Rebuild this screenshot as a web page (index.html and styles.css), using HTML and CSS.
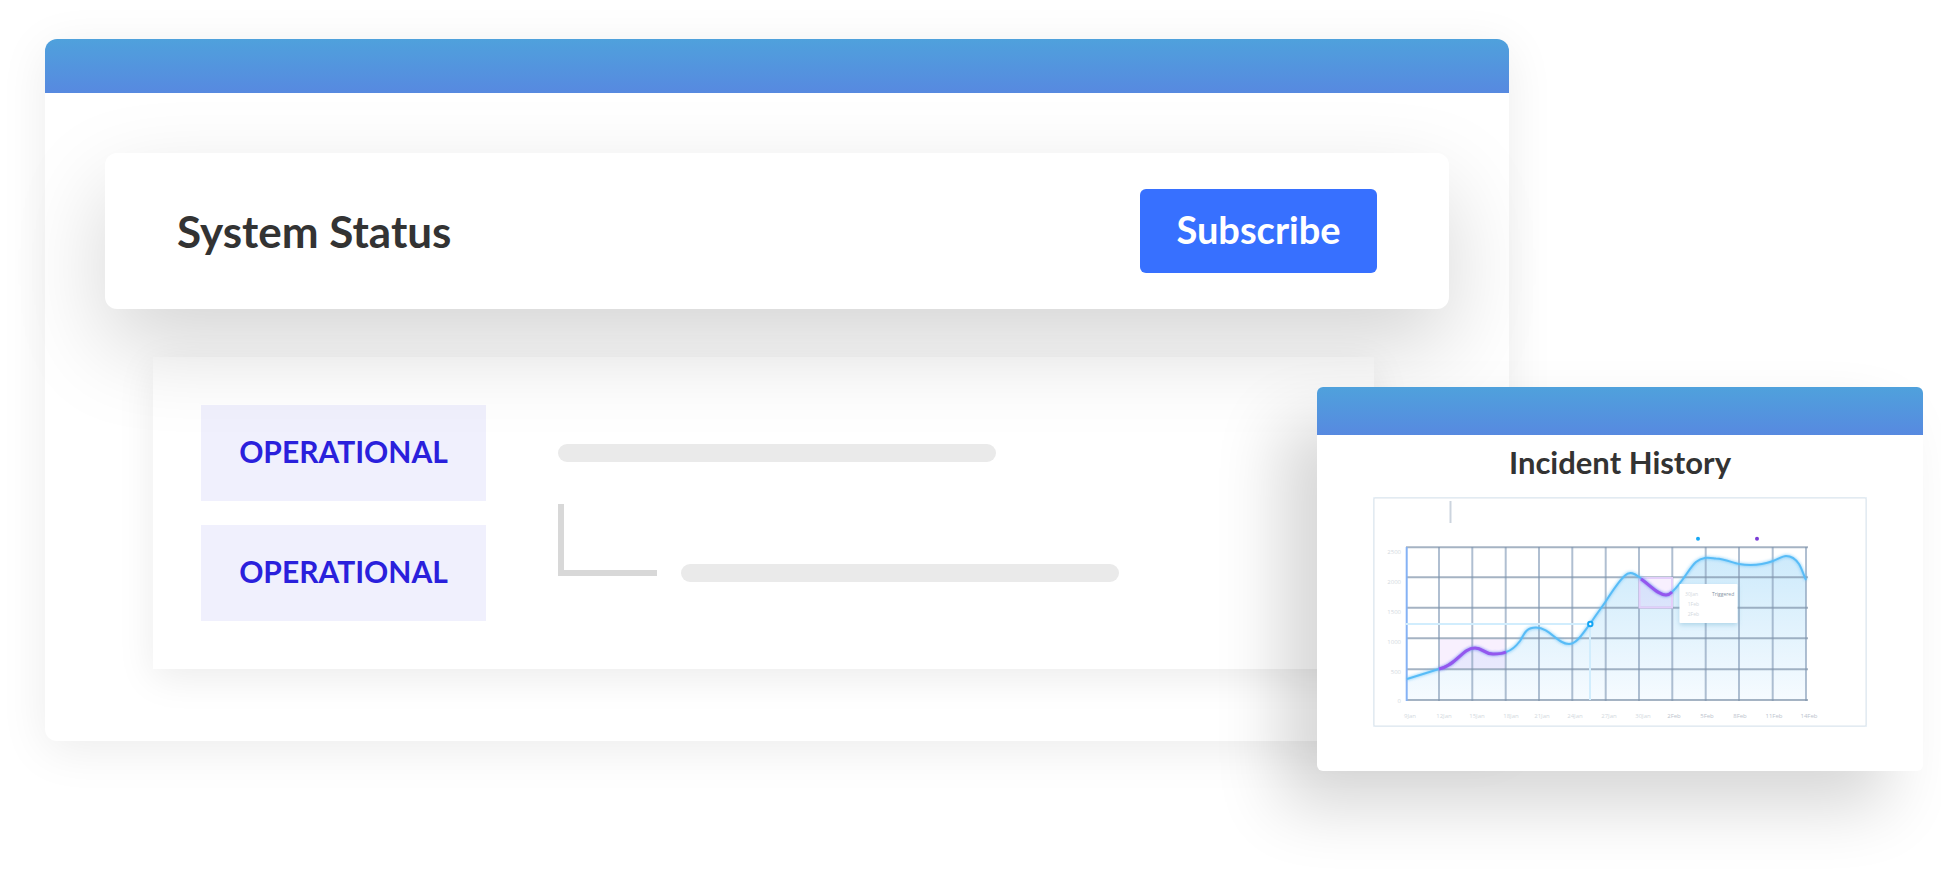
FILE: index.html
```html
<!DOCTYPE html>
<html lang="en">
<head>
<meta charset="utf-8">
<meta name="viewport" content="width=device-width, initial-scale=1">
<title>System Status</title>
<link rel="stylesheet" href="styles.css">
</head>
<body>
<main class="stage">
  <section class="window status-window">
    <div class="title-bar"></div>
    <div class="status-body">
      <header class="status-card">
        <h1 class="status-title">System Status</h1>
        <button class="subscribe" type="button">Subscribe</button>
      </header>
      <div class="services">
        <div class="service">
          <span class="badge">OPERATIONAL</span>
          <span class="line"></span>
        </div>
        <div class="service">
          <span class="badge">OPERATIONAL</span>
          <span class="branch"></span>
          <span class="line"></span>
        </div>
      </div>
    </div>
  </section>

  <section class="window incident-window">
    <div class="title-bar title-bar-small"></div>
    <h2 class="incident-title">Incident History</h2>
    <svg class="chart" viewBox="0 0 494 230" role="img" aria-label="Incident history chart">
      <defs>
        <linearGradient id="area" x1="0" y1="58" x2="0" y2="203" gradientUnits="userSpaceOnUse">
          <stop offset="0" stop-color="#cdeafb"/>
          <stop offset="1" stop-color="#f6fbff"/>
        </linearGradient>
        <filter id="glow" x="-10%" y="-30%" width="120%" height="160%"><feGaussianBlur stdDeviation="1.5"/></filter>
        <filter id="tipShadow" x="-20%" y="-20%" width="140%" height="150%"><feDropShadow dx="0" dy="2" stdDeviation="2.5" flood-color="#5ea9c9" flood-opacity=".4"/></filter>
        <path id="curve" d="M34 182L66 172C84 168 89 151 102 151C110 151 111 157 120 157C125 157 129 157 133 155C140 153 144 148 147 144C151 138 152 130.500 163 130.500C177 130.500 184 147 196 147C204 147 210 136 217 127C225 115 229 110 233 104C240 93 247 83 252 78.500C257 73.500 262 77 266 80C277 87 285 98 293 98C295 98 297 97 299 95C310 85 316 71 323 65C330 59 337 61 343 61.500C352 62 360 66 366 67C377 69 389 68 400 64C405 62.500 409 59 413 59C418 59 422 61 426 67C429 72 431 79 433 83"/>
      </defs>
      <rect class="frame-glow" x="1" y="1" width="492" height="228" rx="1"/>
      <rect class="frame" x="1" y="1" width="492" height="228" rx="1"/>
      <path class="tick" d="M77.500 4V26"/>
      <circle cx="325" cy="41.700" r="2" fill="#16a8f5"/>
      <circle cx="384" cy="41.700" r="2" fill="#7a3bd6"/>

      <path fill="url(#area)" d="M34 182L66 172C84 168 89 151 102 151C110 151 111 157 120 157C125 157 129 157 133 155C140 153 144 148 147 144C151 138 152 130.500 163 130.500C177 130.500 184 147 196 147C204 147 210 136 217 127C225 115 229 110 233 104C240 93 247 83 252 78.500C257 73.500 262 77 266 80C277 87 285 98 293 98C295 98 297 97 299 95C310 85 316 71 323 65C330 59 337 61 343 61.500C352 62 360 66 366 67C377 69 389 68 400 64C405 62.500 409 59 413 59C418 59 422 61 426 67C429 72 431 79 433 83V203H34Z"/>
      <rect class="zone" x="66" y="142" width="67" height="30"/>
      <path class="grid" d="M66 50V204M99.300 50V204M132.700 50V204M166 50V204M199.300 50V204M232.700 50V204M266 50V204M299.300 50V204M332.700 50V204M366 50V204M399.700 50V204M433 50V204"/>
      <path class="grid grid-h" d="M33 50.300H435M33 80.300H435M33 110.700H435M33 141.300H435M33 172.300H435M33 203H435"/>
      <path class="axis" d="M33.700 50V204"/>
      <path class="cross" d="M33 127H217V203"/>
      <rect class="zone zone-framed" x="266.500" y="81" width="32.500" height="29.500"/>
      <use href="#curve" class="curve-glow" filter="url(#glow)"/>
      <use href="#curve" class="curve"/>
      <g id="alerts">
        <path class="alert-glow" filter="url(#glow)" d="M66 172C84 168 89 151 102 151C110 151 111 157 120 157C125 157 129 157 133 155M268 82C278 89 285 98 293 98C295 98 297 97 299 95"/>
        <path class="alert" d="M66 172C84 168 89 151 102 151C110 151 111 157 120 157C125 157 129 157 133 155M268 82C278 89 285 98 293 98C295 98 297 97 299 95"/>
      </g>
      <circle class="marker" cx="217.300" cy="127" r="2.200"/>

      <rect x="306.500" y="87" width="58" height="39" rx="1" fill="#fff" filter="url(#tipShadow)"/>
      <g class="label label-end">
        <text x="325" y="99" font-size="5">30Jan</text>
        <text x="326" y="109" font-size="5">1Feb</text>
        <text x="326" y="119" font-size="5">2Feb</text>
        <text x="28" y="57">2500</text>
        <text x="28" y="87">2000</text>
        <text x="28" y="117">1500</text>
        <text x="28" y="147">1000</text>
        <text x="28" y="177">500</text>
        <text x="28" y="206">0</text>
      </g>
      <text class="label label-tip" x="339" y="99">Triggered</text>
      <g class="label label-mid">
        <text x="37" y="221">9Jan</text>
        <text x="71" y="221">12Jan</text>
        <text x="104" y="221">15Jan</text>
        <text x="138" y="221">18Jan</text>
        <text x="169" y="221">21Jan</text>
        <text x="202" y="221">24Jan</text>
        <text x="236" y="221">27Jan</text>
        <text x="270" y="221">30Jan</text>
      </g>
      <g class="label label-mid label-feb">
        <text x="301" y="221">2Feb</text>
        <text x="334" y="221">5Feb</text>
        <text x="367" y="221">8Feb</text>
        <text x="401" y="221">11Feb</text>
        <text x="436" y="221">14Feb</text>
      </g>
    </svg>
  </section>
</main>
</body>
</html>
```
FILE: styles.css
```css
* {
  box-sizing: border-box;
}

body {
  margin: 0;
  background: #fff;
  color: #333;
  font-family: Lato, "Open Sans", sans-serif;
  overflow-x: hidden;
}

h1,
h2 {
  margin: 0;
  font-weight: 700;
}

.stage {
  display: grid;
  grid-template-columns: minmax(0, 1fr) 192px 414px;
  align-items: start;
  min-height: 100vh;
  padding: 39px 18px 0 45px;
  overflow: hidden;
}

.window {
  grid-row: 1;
  background: #fff;
}

.status-window {
  grid-column: 1 / 3;
  border-radius: 12px;
  box-shadow: 0 9px 48px rgba(0, 0, 0, 0.08);
}

.incident-window {
  grid-column: 2 / 4;
  position: relative;
  z-index: 2;
  margin-top: 348px;
  padding-bottom: 44px;
  border-radius: 6px;
  box-shadow: -36px 36px 66px rgba(0, 0, 0, 0.16);
}

.title-bar {
  height: 54px;
  border-radius: 12px 12px 0 0;
  background: linear-gradient(#4fa1dc, #5789e0);
}

.title-bar-small {
  height: 48px;
  border-radius: 6px 6px 0 0;
}

.status-body {
  padding: 60px 60px 72px;
}

.status-card {
  position: relative;
  z-index: 1;
  display: flex;
  align-items: center;
  justify-content: space-between;
  padding: 36px 72px;
  border-radius: 12px;
  background: #fff;
  box-shadow: 0 36px 90px rgba(0, 0, 0, 0.17);
}

.status-title {
  font-size: 44px;
  line-height: 60px;
}

.subscribe {
  width: 237px;
  height: 84px;
  padding: 0 0 4px;
  border: 0;
  border-radius: 6px;
  background: #3770ff;
  color: #fff;
  font: 700 38px/48px Lato, "Open Sans", sans-serif;
}

.services {
  display: flex;
  flex-direction: column;
  gap: 24px;
  margin: 48px 75px 0 48px;
  padding: 48px;
  background: #fff;
  box-shadow: 0 9px 36px rgba(0, 0, 0, 0.08);
}

.service {
  display: flex;
  align-items: center;
}

.badge {
  width: 285px;
  margin-right: 72px;
  padding-bottom: 4px;
  background: #f0f0fd;
  color: #2a20dc;
  font-size: 30px;
  font-weight: 700;
  line-height: 92px;
  text-align: center;
}

.line {
  width: 438px;
  height: 18px;
  border-radius: 9px;
  background: #eaeaea;
}

.branch {
  align-self: flex-start;
  width: 99px;
  height: 72px;
  margin: -21px 24px 0 0;
  border: solid #d8d8d8;
  border-width: 0 0 6px 6px;
}

.incident-title {
  padding: 6px 0 2px;
  font-size: 31px;
  line-height: 42px;
  text-align: center;
}

.chart {
  display: block;
  width: 494px;
  margin: 12px auto 0;
}

.frame {
  fill: #fff;
  stroke: #dbe4ec;
}

.frame-glow {
  fill: none;
  stroke: #eaf2f8;
  stroke-width: 3;
}

.tick {
  stroke: #ccd4de;
  stroke-width: 2;
}

.grid {
  fill: none;
  stroke: #8ea4bd;
  stroke-opacity: 0.7;
  stroke-width: 2;
}

.grid-h {
  stroke: #7f93aa;
}

.axis {
  stroke: #85b2f5;
  stroke-width: 2;
}

.cross {
  fill: none;
  stroke: #d1edfd;
  stroke-width: 2;
}

.zone {
  fill: #dcb4fa;
  fill-opacity: 0.2;
}

.zone-framed {
  stroke: #e3cffa;
  stroke-width: 2;
}

.curve,
.curve-glow,
.alert,
.alert-glow {
  fill: none;
  stroke: #58bcf7;
  stroke-width: 2;
}

.curve-glow,
.alert-glow {
  stroke-width: 3;
  opacity: 0.6;
}

.alert,
.alert-glow {
  stroke: #9457ee;
  stroke-width: 3;
}

.marker {
  fill: #fff;
  stroke: #12a5f4;
  stroke-width: 2;
}

.label {
  fill: #d3d9e0;
  font-family: "Open Sans", sans-serif;
  font-size: 6px;
}

.label-end {
  text-anchor: end;
}

.label-mid {
  text-anchor: middle;
}

.label-feb {
  fill: #bcc4cd;
}

.label-tip {
  fill: #8494a3;
  font-size: 5px;
}
```
